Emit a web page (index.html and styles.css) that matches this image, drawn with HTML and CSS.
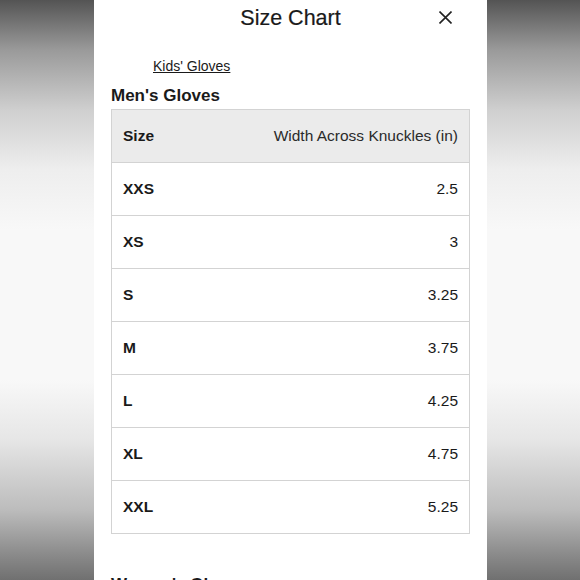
FILE: index.html
```html
<!DOCTYPE html>
<html>
<head>
<meta charset="utf-8">
<link rel="stylesheet" href="styles.css">
</head>
<body>
<div class="panel">
  <div class="header">
    <h1 class="title">Size Chart</h1>
    <button class="close" aria-label="Close">
      <svg width="13" height="13" viewBox="0 0 13 13"><path d="M0.5 0.5 L12.5 12.5 M12.5 0.5 L0.5 12.5" stroke="#222" stroke-width="1.6" fill="none"/></svg>
    </button>
  </div>
  <div class="links"><a href="#" class="link">Kids' Gloves</a></div>
  <h2 class="section">Men's Gloves</h2>
  <table class="chart">
    <tr class="head"><th>Size</th><td>Width Across Knuckles (in)</td></tr>
    <tr><th>XXS</th><td>2.5</td></tr>
    <tr><th>XS</th><td>3</td></tr>
    <tr><th>S</th><td>3.25</td></tr>
    <tr><th>M</th><td>3.75</td></tr>
    <tr><th>L</th><td>4.25</td></tr>
    <tr><th>XL</th><td>4.75</td></tr>
    <tr><th>XXL</th><td>5.25</td></tr>
  </table>
  <h2 class="section next">Women's Gloves</h2>
</div>
</body>
</html>
```
FILE: styles.css
```css
html, body {
  margin: 0;
  padding: 0;
  height: 580px;
  overflow: hidden;
}
body {
  background: linear-gradient(to bottom, #545454 0px, #9a9a9a 50px, #cfcfcf 110px, #eeeeee 170px, #f8f8f8 230px, #f8f8f8 380px, #e6e6e6 440px, #bcbcbc 510px, #8a8a8a 555px, #707070 580px);
  font-family: "Liberation Sans", Arial, sans-serif;
  color: #1a1a1a;
}
.panel {
  width: 393px;
  height: 580px;
  margin-left: 94px;
  background: #fff;
  box-sizing: border-box;
  padding: 0 17px 0 17px;
  overflow: hidden;
}
.header {
  position: relative;
  height: 37px;
  display: flex;
  align-items: center;
  justify-content: center;
}
.title {
  margin: 0;
  font-size: 21.5px;
  font-weight: normal;
  color: #1a1a1a;
  -webkit-text-stroke: 0.2px #1a1a1a;
}
.close {
  position: absolute;
  right: 18px;
  top: 11px;
  border: 0;
  background: none;
  padding: 0;
  width: 13px;
  height: 13px;
  display: flex;
}
.links {
  padding: 21px 0 0 42px;
  height: 20px;
  font-size: 14px;
  line-height: 16px;
}
.link {
  color: #1a1a1a;
  text-decoration: underline;
}
.section {
  margin: 0;
  font-size: 17px;
  font-weight: bold;
  line-height: 20px;
  height: 31px;
  padding-top: 8px;
  box-sizing: border-box;
  color: #1a1a1a;
}
.chart {
  width: 359px;
  border-collapse: collapse;
  font-size: 15.5px;
}
.chart tr {
  height: 53px;
}
.chart th, .chart td {
  border-top: 1px solid #d3d3d3;
  border-bottom: 1px solid #d3d3d3;
  padding: 0 11px;
}
.chart th {
  text-align: left;
  font-weight: bold;
  border-left: 1px solid #d3d3d3;
}
.chart td {
  text-align: right;
  border-right: 1px solid #d3d3d3;
}
.chart .head th, .chart .head td {
  background: #ebebeb;
}
.chart .head td {
  color: #2a2a2a;
}
.section.next {
  margin-top: 33px;
}
```
